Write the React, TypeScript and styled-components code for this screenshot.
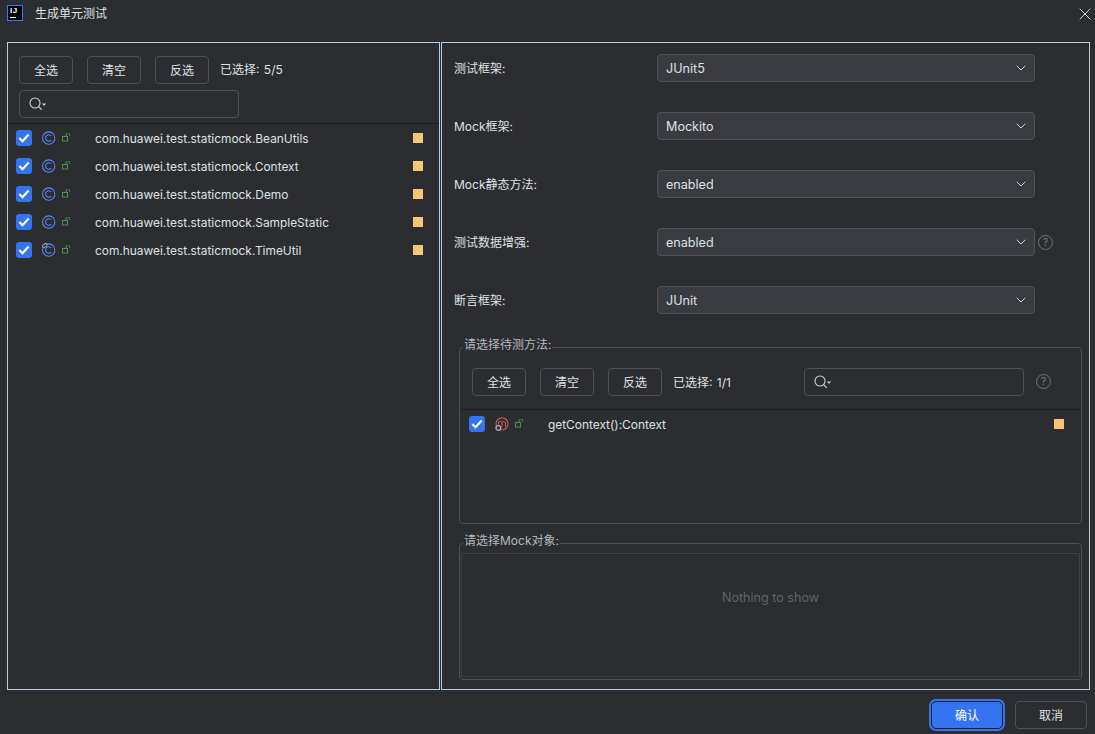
import React from 'react';
import styled, { createGlobalStyle } from 'styled-components';
import { ChevronDown, X } from 'lucide-react';

const GlobalStyle = createGlobalStyle`
  html, body {
    margin: 0;
    padding: 0;
    background: #2b2d30;
  }
  * {
    box-sizing: border-box;
  }
`;

const Dialog = styled.div`
  width: 1095px;
  height: 734px;
  background: #2b2d30;
  color: #dfe1e5;
  font-family: Inter, 'Noto Sans CJK SC', sans-serif;
  font-size: 13px;
  display: flex;
  flex-direction: column;
  overflow: hidden;
`;

const TitleBar = styled.div`
  height: 42px;
  flex: none;
  display: flex;
  align-items: flex-start;
  padding: 5px 0 0 7px;
`;

const AppLogo = styled.div`
  width: 16px;
  height: 16px;
  background: #000;
  border: 1px solid #2f7bf0;
  color: #fff;
  font-family: 'Liberation Sans', sans-serif;
  font-size: 8px;
  font-weight: 700;
  letter-spacing: 0.5px;
  line-height: 8px;
  padding: 1px 0 0 2px;
  position: relative;
  flex: none;

  &::after {
    content: '';
    position: absolute;
    left: 2px;
    bottom: 2px;
    width: 6px;
    height: 1px;
    background: #fff;
  }
`;

const Title = styled.div`
  margin-left: 12px;
  font-size: 12px;
  line-height: 18px;
  flex: 1;
`;

const CloseButton = styled.div`
  color: #ced0d6;
  display: flex;
  margin-top: -1px;
`;

const Main = styled.div`
  flex: none;
  height: 648px;
  display: flex;
  gap: 1px;
  padding: 0 5px 0 7px;
`;

const Panel = styled.div<{ $width: number }>`
  width: ${(p) => p.$width}px;
  flex: none;
  border: 1px solid #b9cde3;
  display: flex;
  flex-direction: column;
`;

const LeftTop = styled.div`
  padding: 13px 11px 0;
  display: flex;
  flex-direction: column;
  gap: 6px;
  height: 81px;
  flex: none;
  border-bottom: 1px solid #1e1f22;
`;

const ButtonRow = styled.div`
  display: flex;
  align-items: center;
  gap: 14px;
`;

const ToolButton = styled.div`
  width: 54px;
  height: 28px;
  border: 1px solid #4e5157;
  border-radius: 4px;
  display: flex;
  align-items: center;
  justify-content: center;
  padding-bottom: 1px;
  font-size: 12px;
  color: #dfe1e5;
  flex: none;
`;

const CountLabel = styled.span`
  font-size: 12px;
  word-spacing: 1px;
  color: #dfe1e5;
  margin-left: -3px;
  margin-top: -3px;
`;

const SearchBox = styled.div`
  width: 220px;
  height: 28px;
  border: 1px solid #4e5157;
  border-radius: 4px;
  display: flex;
  align-items: center;
  padding-left: 9px;
  flex: none;
`;

const ListRow = styled.div`
  height: 28px;
  flex: none;
  display: flex;
  align-items: center;
  padding: 0 16px 0 8px;
`;

const RowName = styled.span`
  margin-left: 24px;
  flex: 1;
  font-size: 11.9px;
  color: #dfe1e5;
  white-space: nowrap;
`;

const CheckBox = styled.div`
  width: 16px;
  height: 16px;
  border-radius: 3px;
  background: #3574f0;
  display: flex;
  align-items: center;
  justify-content: center;
  flex: none;
  margin-right: 10px;
`;

const IconSlot = styled.div`
  width: 14px;
  height: 15px;
  display: flex;
  flex: none;
  margin-right: 6px;
`;

const LockSlot = styled.div`
  width: 9px;
  height: 10px;
  display: flex;
  flex: none;
`;

const Swatch = styled.div`
  width: 10px;
  height: 10px;
  background: #f5c774;
  flex: none;
`;

const RightBody = styled.div`
  flex: 1;
  padding: 11px 7px 0 12px;
  display: flex;
  flex-direction: column;
`;

const FormRow = styled.div`
  height: 28px;
  flex: none;
  display: flex;
  align-items: center;
  margin-bottom: 30px;
`;

const FormLabel = styled.div`
  width: 203px;
  flex: none;
  font-size: 12px;
  padding-bottom: 2px;
  color: #dfe1e5;
`;

const SelectBox = styled.div`
  width: 378px;
  height: 28px;
  flex: none;
  background: #393b40;
  border: 1px solid #4e5157;
  border-radius: 4px;
  display: flex;
  align-items: center;
  justify-content: space-between;
  padding: 0 5px 0 8px;
  font-size: 12.6px;
  color: #dfe1e5;
`;

const HelpIcon = styled.div.attrs({ children: '?' })`
  width: 15px;
  height: 15px;
  margin-left: 3px;
  border: 1px solid #6f737a;
  border-radius: 50%;
  color: #7a7e85;
  font-size: 10px;
  line-height: 13px;
  text-align: center;
  flex: none;
`;

const GroupBox = styled.fieldset<{ $height: number; $marginTop: number }>`
  margin: ${(p) => p.$marginTop}px 0 0 5px;
  padding: 0 1px 1px;
  width: 623px;
  height: ${(p) => p.$height}px;
  flex: none;
  min-width: 0;
  border: 1px solid #4e5157;
  border-radius: 4px;
`;

const GroupTitle = styled.legend`
  margin-left: 2px;
  padding: 0 1px 4px;
  font-size: 12px;
  line-height: 16px;
  color: #b4b8bf;
`;

const MethodTools = styled.div`
  height: 53px;
  display: flex;
  align-items: center;
  gap: 14px;
  padding: 0 0 3px 11px;
  border-bottom: 1px solid #1e1f22;
`;

const MethodCount = styled(CountLabel)`
  margin-top: 0;
  width: 114px;
`;

const MethodSearch = styled(SearchBox)`
  margin-left: 3px;
`;

const MethodHelp = styled(HelpIcon)`
  margin-left: -2px;
`;

const EmptyBox = styled.div`
  height: 124px;
  border: 1px solid #3c3f44;
  display: flex;
  align-items: center;
  justify-content: center;
  padding-bottom: 36px;
  color: #5f6268;
  font-size: 12.6px;
`;

const Footer = styled.div`
  flex: 1;
  display: flex;
  align-items: center;
  justify-content: flex-end;
  gap: 12px;
  padding: 5px 8px 0 0;
`;

const FooterButton = styled.div<{ $primary?: boolean }>`
  width: 72px;
  height: 28px;
  border-radius: ${(p) => (p.$primary ? 5 : 4)}px;
  display: flex;
  align-items: center;
  justify-content: center;
  font-size: 12px;
  color: ${(p) => (p.$primary ? '#fff' : '#dfe1e5')};
  background: ${(p) => (p.$primary ? '#3574f0' : 'transparent')};
  border: 1px solid ${(p) => (p.$primary ? '#1e1f22' : '#4e5157')};
  box-shadow: ${(p) => (p.$primary ? '0 0 0 2px #3574f0' : 'none')};
`;

const Check = () => (
  <svg width="12" height="10" viewBox="0 0 12 10" fill="none">
    <path d="M1.3 5 L4.5 8.2 L10.7 1.5" stroke="#fff" strokeWidth="2.2" />
  </svg>
);

const SearchIcon = () => (
  <svg width="20" height="14" viewBox="0 0 20 14" fill="none">
    <circle cx="6" cy="6" r="5" stroke="#ced0d6" strokeWidth="1.1" />
    <path d="M9.6 9.6 L12.8 12.8" stroke="#ced0d6" strokeWidth="1.2" />
    <path d="M13 6.5 H17 L15 9 Z" fill="#ced0d6" />
  </svg>
);

const ClassIcon = ({ pinned }: { pinned?: boolean }) => (
  <svg width="15" height="15" viewBox="0 0 15 15" fill="none">
    <circle cx="7.2" cy="7" r="6.6" stroke="#548af7" strokeWidth="1.1" />
    <path d="M10 4.8 A3.5 3.5 0 1 0 10 9.2" stroke="#548af7" strokeWidth="1.1" />
    {pinned && (
      <ellipse
        cx="3"
        cy="2.2"
        rx="2.8"
        ry="1.6"
        transform="rotate(-40 3 2.2)"
        fill="#2b2d30"
        stroke="#a8adb5"
        strokeWidth="1"
      />
    )}
  </svg>
);

const MethodIcon = () => (
  <svg width="15" height="15" viewBox="0 0 15 15" fill="none">
    <circle cx="7.5" cy="6.8" r="6.5" stroke="#db5c5c" strokeWidth="1.1" />
    <path
      d="M3.8 10.2 V4.4 M3.8 5.2 Q5.6 3.2 7.5 5 V10.2 M7.5 5 Q9.4 3.2 11.2 5.2 V10.2"
      stroke="#db5c5c"
      strokeWidth="1"
    />
    <circle cx="3.6" cy="11.2" r="2.5" fill="#2b2d30" stroke="#a8adb5" strokeWidth="1.5" />
  </svg>
);

const LockIcon = () => (
  <svg width="9" height="10" viewBox="0 0 9 10" fill="none">
    <rect x="0.5" y="3.5" width="5" height="4.5" stroke="#4f8f57" />
    <path d="M4 3.5 V1.8 A1.7 1.7 0 0 1 7.6 1.8 V3" stroke="#4f8f57" />
  </svg>
);

const classes = [
  'com.huawei.test.staticmock.BeanUtils',
  'com.huawei.test.staticmock.Context',
  'com.huawei.test.staticmock.Demo',
  'com.huawei.test.staticmock.SampleStatic',
  'com.huawei.test.staticmock.TimeUtil',
];

const options = [
  { label: '测试框架:', value: 'JUnit5' },
  { label: 'Mock框架:', value: 'Mockito' },
  { label: 'Mock静态方法:', value: 'enabled' },
  { label: '测试数据增强:', value: 'enabled', help: true },
  { label: '断言框架:', value: 'JUnit' },
];

const actions = ['全选', '清空', '反选'];

export default function App() {
  return (
    <Dialog>
      <GlobalStyle />
      <TitleBar>
        <AppLogo>IJ</AppLogo>
        <Title>生成单元测试</Title>
        <CloseButton>
          <X size={20} strokeWidth={1.2} />
        </CloseButton>
      </TitleBar>
      <Main>
        <Panel $width={433}>
          <LeftTop>
            <ButtonRow>
              {actions.map((a) => (
                <ToolButton key={a}>{a}</ToolButton>
              ))}
              <CountLabel>已选择: 5/5</CountLabel>
            </ButtonRow>
            <SearchBox>
              <SearchIcon />
            </SearchBox>
          </LeftTop>
          {classes.map((c, i) => (
            <ListRow key={c}>
              <CheckBox>
                <Check />
              </CheckBox>
              <IconSlot>
                <ClassIcon pinned={i === 4} />
              </IconSlot>
              <LockSlot>
                <LockIcon />
              </LockSlot>
              <RowName>{c}</RowName>
              <Swatch />
            </ListRow>
          ))}
        </Panel>
        <Panel $width={649}>
          <RightBody>
            {options.map((o) => (
              <FormRow key={o.label}>
                <FormLabel>{o.label}</FormLabel>
                <SelectBox>
                  {o.value}
                  <ChevronDown size={16} strokeWidth={1.5} color="#ced0d6" />
                </SelectBox>
                {o.help && <HelpIcon />}
              </FormRow>
            ))}
            <GroupBox $height={187} $marginTop={-7}>
              <GroupTitle>请选择待测方法:</GroupTitle>
              <MethodTools>
                {actions.map((a) => (
                  <ToolButton key={a}>{a}</ToolButton>
                ))}
                <MethodCount>已选择: 1/1</MethodCount>
                <MethodSearch>
                  <SearchIcon />
                </MethodSearch>
                <MethodHelp />
              </MethodTools>
              <ListRow>
                <CheckBox>
                  <Check />
                </CheckBox>
                <IconSlot>
                  <MethodIcon />
                </IconSlot>
                <LockSlot>
                  <LockIcon />
                </LockSlot>
                <RowName>getContext():Context</RowName>
                <Swatch />
              </ListRow>
            </GroupBox>
            <GroupBox $height={147} $marginTop={9}>
              <GroupTitle>请选择Mock对象:</GroupTitle>
              <EmptyBox>Nothing to show</EmptyBox>
            </GroupBox>
          </RightBody>
        </Panel>
      </Main>
      <Footer>
        <FooterButton $primary>确认</FooterButton>
        <FooterButton>取消</FooterButton>
      </Footer>
    </Dialog>
  );
}
